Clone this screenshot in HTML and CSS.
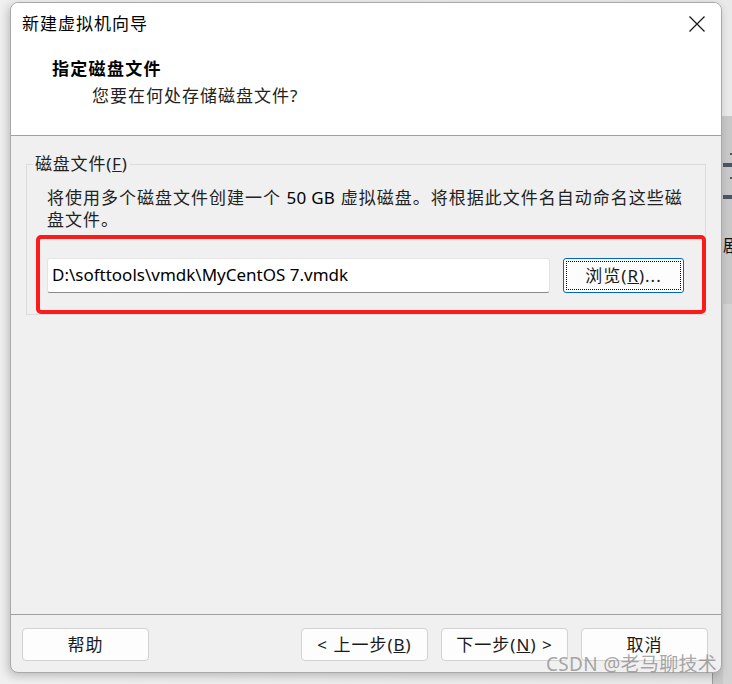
FILE: index.html
```html
<!DOCTYPE html>
<html lang="zh-CN">
<head>
<meta charset="utf-8">
<title>新建虚拟机向导</title>
<link rel="stylesheet" href="styles.css">
</head>
<body>
<div class="bgwin">
  <div class="bg-dot d1"></div>
  <div class="bg-line"></div>
  <div class="bg-dot d2"></div>
  <div class="bg-line l2"></div>
  <div class="bg-text">剧</div>
  <div class="bg-low"></div>
</div>
<div class="window">
  <div class="titlebar">
    <span class="title">新建虚拟机向导</span>
    <svg class="close" width="16" height="16" viewBox="0 0 16 16"><path d="M0.5 0.5 L15.5 15.5 M15.5 0.5 L0.5 15.5" stroke="#1a1a1a" stroke-width="1.3" fill="none"/></svg>
  </div>
  <div class="header">
    <div class="h-title">指定磁盘文件</div>
    <div class="h-sub">您要在何处存储磁盘文件?</div>
  </div>
  <div class="content">
    <fieldset class="group">
      <legend>磁盘文件(<u>F</u>)</legend>
      <p class="desc">将使用多个磁盘文件创建一个 <span class="lat">50 GB</span> 虚拟磁盘。将根据此文件名自动命名这些磁盘文件。</p>
      <div class="row">
        <div class="input">D:\softtools\vmdk\MyCentOS 7.vmdk</div>
        <button class="btn browse">浏览(<u>R</u>)...</button>
      </div>
    </fieldset>
  </div>
  <div class="footer">
    <button class="btn help">帮助</button>
    <button class="btn">&lt; 上一步(<u>B</u>)</button>
    <button class="btn">下一步(<u>N</u>) &gt;</button>
    <button class="btn">取消</button>
  </div>
  <div class="redmark"></div>
</div>
<div class="watermark">CSDN @老马聊技术</div>
</body>
</html>
```
FILE: styles.css
```css
* { box-sizing: border-box; }
html, body { margin: 0; }
body {
  width: 732px;
  height: 684px;
  padding: 2px 0 0 10px;
  position: relative;
  overflow: hidden;
  background: linear-gradient(90deg, #f0f0f0 0%, #e9e9e9 100%);
  font-family: "Noto Sans", "Noto Sans CJK SC", sans-serif;
  color: #1a1a1a;
}
.bgwin {
  position: absolute;
  left: 712px;
  top: 116px;
  width: 30px;
  height: 568px;
  background: #c8c8c8;
  border-left: 1px solid #9c9c9c;
  z-index: 0;
  overflow: hidden;
}
.bg-dot { position: absolute; left: 17px; width: 2px; height: 2px; background: #555; }
.bg-dot.d1 { top: 37px; }
.bg-dot.d2 { top: 61px; }
.bg-line { position: absolute; left: 10px; right: 0; top: 47px; height: 4px; background: #4c5661; }
.bg-line.l2 { top: 79px; }
.bg-text { position: absolute; left: 10px; top: 118px; width: 20px; font-size: 17px; line-height: 22px; color: #111; font-family: "Noto Sans CJK SC", sans-serif; }
.bg-low { position: absolute; left: 10px; right: 0; top: 188px; bottom: 0; background: #d3d3d3; }

.window {
  position: relative;
  z-index: 1;
  width: 712px;
  height: 671px;
  border: 1px solid #a9a9a9;
  border-radius: 8px;
  background: #f0f0f0;
  display: flex;
  flex-direction: column;
  overflow: hidden;
  box-shadow: -2px 3px 10px rgba(0, 0, 0, 0.22);
}
.titlebar {
  height: 42px;
  flex-shrink: 0;
  background: #fff;
  display: flex;
  align-items: center;
  justify-content: space-between;
  padding: 0 16px 0 11px;
}
.title { font-size: 17px; line-height: 22px; letter-spacing: 1px; color: #000; }
.close { display: block; }
.header {
  height: 91px;
  flex-shrink: 0;
  background: #fff;
  border-bottom: 1px solid #a0a0a0;
  padding: 12px 0 0 41px;
}
.h-title { font-size: 17px; line-height: 24px; font-weight: 700; letter-spacing: 1.3px; color: #000; }
.h-sub { margin: 3px 0 0 40px; font-size: 17px; line-height: 24px; letter-spacing: 1px; color: #222; }
.content { flex: 1; padding: 17px 15px 0; }
.group {
  margin: 0;
  min-width: 0;
  border: 1px solid #dcdcdc;
  padding: 12px 21px 21px 20px;
}
.group legend {
  margin-left: -14px;
  padding: 0 2px;
  font-size: 17px;
  line-height: 22px;
  letter-spacing: 0.8px;
  color: #222;
}
.desc {
  margin: 0;
  width: 650px;
  font-size: 17px;
  line-height: 22px;
  letter-spacing: 1px;
  color: #222;
}
.lat { color: #000; letter-spacing: 0.3px; }
.row { display: flex; gap: 13px; margin-top: 27px; height: 35px; }
.input {
  flex: 1;
  background: #fff;
  border: 1px solid #e4e4e4;
  border-bottom-color: #8a8a8a;
  border-radius: 3px;
  padding: 0 4px;
  font-size: 17px;
  line-height: 31px;
  color: #000;
  white-space: nowrap;
}
.btn {
  width: 127px;
  height: 33px;
  padding: 0;
  background: #fdfdfd;
  border: 1px solid #d2d2d2;
  border-radius: 4px;
  font-family: "Noto Sans", "Noto Sans CJK SC", sans-serif;
  font-size: 17px;
  line-height: 22px;
  letter-spacing: 1px;
  color: #1a1a1a;
}
.browse {
  position: relative;
  width: 121px;
  height: 35px;
  border-color: #0067c0;
  border-radius: 3px;
}
.browse::after {
  content: "";
  position: absolute;
  inset: 2px;
  border: 1px dotted #000;
}
.footer {
  height: 58px;
  flex-shrink: 0;
  border-top: 1px solid #a0a0a0;
  padding: 13px 13px 0 11px;
  display: flex;
  gap: 13px;
}
.help { margin-right: auto; }
.redmark {
  position: absolute;
  left: 25px;
  top: 232px;
  width: 670px;
  height: 79px;
  border: 4px solid #fb1b1b;
  border-radius: 5px;
}
.watermark {
  position: absolute;
  z-index: 2;
  left: 546px;
  top: 653px;
  font-size: 19px;
  line-height: 22px;
  letter-spacing: 0.3px;
  color: rgba(130, 130, 130, 0.7);
  white-space: nowrap;
}
```
